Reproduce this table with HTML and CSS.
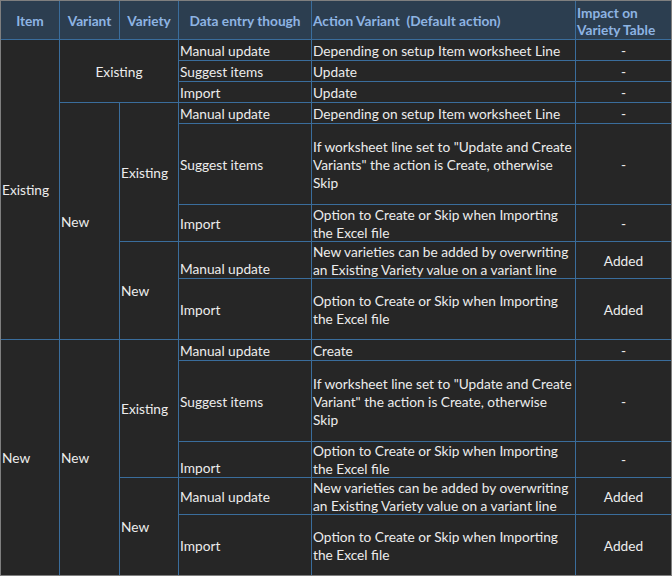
FILE: index.html
```html
<!DOCTYPE html>
<html lang="en">
<head>
<meta charset="utf-8">
<title>Variety table</title>
<link rel="stylesheet" href="styles.css">
</head>
<body>
<div class="sheet">
  <div class="h hc">Item</div>
  <div class="h hc">Variant</div>
  <div class="h hc">Variety</div>
  <div class="h hc">Data entry though</div>
  <div class="h">Action Variant&nbsp; (Default action)</div>
  <div class="h">Impact on<br>Variety Table</div>

  <div class="d rs8">Existing</div>
  <div class="d cs2 rs3 c">Existing</div>
  <div class="d">Manual update</div>
  <div class="d">Depending on setup Item worksheet Line</div>
  <div class="d c">-</div>

  <div class="d">Suggest items</div>
  <div class="d">Update</div>
  <div class="d c">-</div>

  <div class="d">Import</div>
  <div class="d">Update</div>
  <div class="d c">-</div>

  <div class="d rs5">New</div>
  <div class="d rs3">Existing</div>
  <div class="d">Manual update</div>
  <div class="d">Depending on setup Item worksheet Line</div>
  <div class="d c">-</div>

  <div class="d">Suggest items</div>
  <div class="d">If worksheet line set to "Update and Create<br>Variants" the action is Create, otherwise<br>Skip</div>
  <div class="d c">-</div>

  <div class="d">Import</div>
  <div class="d">Option to Create or Skip when Importing<br>the Excel file</div>
  <div class="d c">-</div>

  <div class="d rs2">New</div>
  <div class="d b">Manual update</div>
  <div class="d">New varieties can be added by overwriting<br>an Existing Variety value on a variant line</div>
  <div class="d c">Added</div>

  <div class="d">Import</div>
  <div class="d">Option to Create or Skip when Importing<br>the Excel file</div>
  <div class="d c">Added</div>

  <div class="d rs5">New</div>
  <div class="d rs5">New</div>
  <div class="d rs3">Existing</div>
  <div class="d">Manual update</div>
  <div class="d">Create</div>
  <div class="d c">-</div>

  <div class="d">Suggest items</div>
  <div class="d">If worksheet line set to "Update and Create<br>Variant" the action is Create, otherwise<br>Skip</div>
  <div class="d c">-</div>

  <div class="d b">Import</div>
  <div class="d">Option to Create or Skip when Importing<br>the Excel file</div>
  <div class="d c">-</div>

  <div class="d rs2">New</div>
  <div class="d">Manual update</div>
  <div class="d">New varieties can be added by overwriting<br>an Existing Variety value on a variant line</div>
  <div class="d c">Added</div>

  <div class="d">Import</div>
  <div class="d">Option to Create or Skip when Importing<br>the Excel file</div>
  <div class="d c">Added</div>
</div>
</body>
</html>
```
FILE: styles.css
```css
html, body {
  margin: 0;
  padding: 0;
  background: #262626;
}

.sheet {
  box-sizing: border-box;
  width: 672px;
  height: 576px;
  border: 1px solid #7f7f7f;
  background: #3a6d9c;
  display: grid;
  gap: 1px;
  grid-template-columns: 58px 59px 58px 132px 263px 95px;
  grid-template-rows: 38px 20px 20px 20px 20px 80px 36px 36px 60px 20px 80px 35px 36px 60px;
  font-family: Lato, "Open Sans", sans-serif;
  font-size: 13.7px;
  line-height: 18px;
}

.h {
  background: #2c3e50;
  color: #8eb4e3;
  font-weight: 700;
  display: flex;
  align-items: center;
  padding: 1px 1px 0;
  line-height: 17px;
}

.hc {
  justify-content: center;
}

.d {
  background: #262626;
  color: #ececec;
  display: flex;
  align-items: center;
  padding: 1px 1px 0;
  white-space: nowrap;
}

.c {
  justify-content: center;
}

.b {
  align-items: flex-end;
}

.rs2 { grid-row: span 2; }
.rs3 { grid-row: span 3; }
.rs5 { grid-row: span 5; }
.rs8 { grid-row: span 8; }
.cs2 { grid-column: span 2; }
```
